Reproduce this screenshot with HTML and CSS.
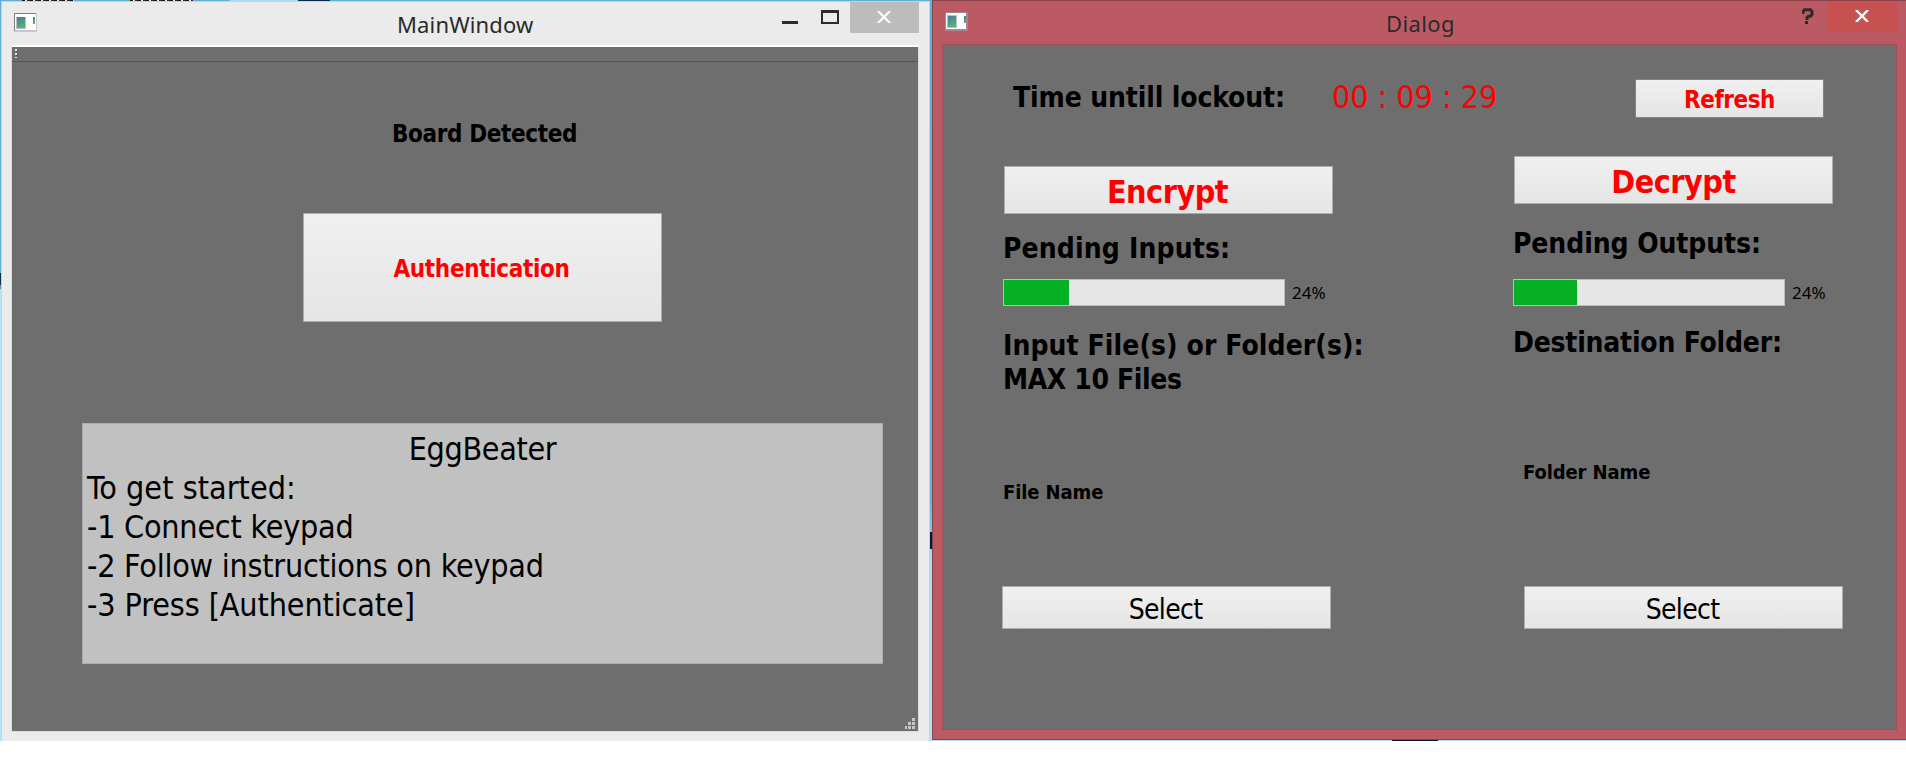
FILE: index.html
```html
<!DOCTYPE html>
<html lang="en">
<head>
<meta charset="utf-8">
<title>EggBeater</title>
<link rel="stylesheet" href="styles.css">
</head>
<body>
<div class="desktop">
  <i class="patch patch-text1"></i><i class="patch patch-text2"></i><i class="patch patch-glow"></i><i class="patch patch-dark"></i>
  <i class="patch patch-left"></i><i class="patch patch-mid"></i><i class="patch patch-bottom"></i>

  <section class="window main-window">
    <header class="titlebar">
      <svg class="app-icon" width="23" height="19" viewBox="0 0 23 19">
        <defs><linearGradient id="g" x1="0" y1="0" x2=".3" y2="1"><stop offset="0" stop-color="#3f7ca0"/><stop offset="1" stop-color="#5cb075"/></linearGradient></defs>
        <rect width="23" height="19" rx="1" fill="#c3c7d0"/><path d="M0 18V0H22V1H1V18Z" fill="#7c8088"/><rect x="1" y="1" width="21" height="16" fill="#fff"/>
        <rect x="2" y="4" width="10" height="12" fill="#b9c0cc"/><rect x="3" y="4" width="8" height="11" fill="url(#g)"/><rect x="19" y="4" width="2" height="7" fill="url(#g)"/>
      </svg>
      <h1 class="title main-title">MainWindow</h1>
      <div class="controls">
        <svg class="ctl-min" width="16" height="3"><rect width="16" height="3" fill="#2b2b2b"/></svg>
        <svg class="ctl-max" width="18" height="14"><path d="M0 0H18V14H0ZM2 3V12H16V3Z" fill="#2b2b2b" fill-rule="evenodd"/></svg>
        <span class="close"><svg width="14" height="12" viewBox="0 0 14 12"><path d="M1 0 13 12M13 0 1 12" stroke="#fff" stroke-width="2.2"/></svg></span>
      </div>
    </header>
    <div class="client main-client">
      <div class="toolbar"><i></i><i></i><i></i></div>
      <div class="board">Board Detected</div>
      <button class="btn btn-auth">Authentication</button>
      <div class="info">
        <p class="info-title">EggBeater</p>
        <p class="l1">To get started:</p>
        <p class="l2">-1 Connect keypad</p>
        <p class="l2">-2 Follow instructions on keypad</p>
        <p class="l3">-3 Press [Authenticate]</p>
      </div>
      <svg class="grip" width="10" height="12" fill="#c6c6c6"><path d="M7 0h3v3h-3zM3 4h3v3h-3zM7 4h3v3h-3zM0 8h2v3h-2zM3 8h3v3h-3zM7 8h3v3h-3z"/></svg>
    </div>
  </section>

  <section class="window dialog">
    <header class="titlebar">
      <svg class="app-icon" width="23" height="19" viewBox="0 0 23 19">
        <rect width="23" height="19" rx="1" fill="#a9848c"/><rect x="1" y="1" width="20" height="16" fill="#fff"/>
        <rect x="2" y="3" width="10" height="13" fill="#b9c0cc"/><rect x="3" y="4" width="8" height="11" fill="url(#g)"/><rect x="19" y="4" width="2" height="7" fill="url(#g)"/>
      </svg>
      <h1 class="title dialog-title">Dialog</h1>
      <div class="controls">
        <svg class="ctl-help" width="12" height="17"><path d="M1.5 6V3.5L3 1.7H9L10.5 3.5V6.5L9 8.2H7L5.5 9.5V12M3.5 14.5H6.5" transform="translate(-.5 0)" fill="none" stroke="#2b2b2b" stroke-width="3"/></svg>
        <span class="close"><svg width="14" height="12" viewBox="0 0 14 12"><path d="M1 0 13 12M13 0 1 12" stroke="#fff" stroke-width="2.4"/></svg></span>
      </div>
    </header>
    <div class="client dialog-client">
      <div class="top-row">
        <span class="lockout">Time untill lockout:</span>
        <span class="timer">00 : 09 : 29</span>
        <button class="btn btn-refresh">Refresh</button>
      </div>
      <div class="columns">
        <div class="col-in">
          <button class="btn btn-crypt">Encrypt</button>
          <div class="heading pending-in">Pending Inputs:</div>
          <div class="progress"><div class="track"><div class="fill" style="width:65px"></div></div><span>24%</span></div>
          <div class="heading files"><div class="files-a">Input File(s) or Folder(s):</div><div class="files-b">MAX 10 Files</div></div>
          <div class="name file-name">File Name</div>
          <button class="btn btn-select">Select</button>
        </div>
        <div class="col-out">
          <button class="btn btn-crypt">Decrypt</button>
          <div class="heading pending-out">Pending Outputs:</div>
          <div class="progress"><div class="track"><div class="fill" style="width:63px"></div></div><span>24%</span></div>
          <div class="heading destination">Destination Folder:</div>
          <div class="name folder-name">Folder Name</div>
          <button class="btn btn-select">Select</button>
        </div>
      </div>
    </div>
  </section>
</div>
</body>
</html>
```
FILE: styles.css
```css
* { box-sizing: border-box; margin: 0; padding: 0; }
body { background: #fff; font-family: "DejaVu Sans Condensed", "Noto Sans", sans-serif; color: #000; overflow: hidden; }

/* Desktop showing between the two windows */
.desktop { position: relative; width: 1906px; height: 741px; background: linear-gradient(#5fb0d8 0, #60b3dc 500px, #a9dcf5 560px, #b3e2f6 741px); overflow: hidden; }
.patch { position: absolute; display: block; }
.patch-text1 { left: 22px; top: 0; width: 52px; height: 1px; background: repeating-linear-gradient(90deg, #111 0 3px, #dce8ee 3px 5px, #3a2a20 5px 8px); }
.patch-text2 { left: 130px; top: 0; width: 63px; height: 1px; background: repeating-linear-gradient(90deg, #111 0 3px, #dce8ee 3px 5px, #3a2a20 5px 8px); }
.patch-glow { left: 230px; top: 0; width: 68px; height: 1px; background: #a8dcf4; }
.patch-dark { left: 298px; top: 0; width: 32px; height: 1px; background: #062c50; }
.patch-left { left: 0; top: 273px; width: 1px; height: 468px; background: linear-gradient(#083050 0 12px, #888 12px 16px, #b3e6fb 16px); }
.patch-mid { left: 929px; top: 532px; width: 4px; height: 17px; background: #04183a; }
.patch-bottom { left: 1392px; top: 740px; width: 46px; height: 1px; background: #04183a; }

.window { position: absolute; }
.main-window { left: 1px; top: 1px; width: 929px; height: 740px; background: #ebebeb; border: 1px solid #d3cfcf; border-bottom: 0; }
.dialog { left: 932px; top: 0; width: 974px; height: 740px; background: #bc5a64; border: 1px solid #8b434b; border-right: 0; }

.titlebar { display: flex; align-items: flex-start; height: 43px; }
.title { font-family: "Noto Sans", "Open Sans", sans-serif; font-size: 22px; font-weight: 400; line-height: 30px; color: #2a2a2a; white-space: nowrap; }
.controls { display: flex; align-items: flex-start; margin-left: auto; }
.close { display: flex; align-items: center; justify-content: center; width: 69px; height: 31px; padding: 0 1px 1px 0; }

.main-window .app-icon { margin: 11px 0 0 12px; }
.main-title { margin: 7px 0 0 360px; letter-spacing: .14px; }
.ctl-min { margin: 19px 23px 0 0; }
.ctl-max { margin: 8px 11px 0 0; }
.main-window .close { margin-right: 10px; background: #bcbcbc; }

.dialog .app-icon { margin: 11px 0 0 12px; }
.dialog-title { margin: 7px 0 0 418px; letter-spacing: .39px; }
.ctl-help { margin: 7px 14px 0 0; }
.dialog .close { margin-right: 9px; background: #c75050; }

.client { background: #6e6e6e; }
.main-client { position: relative; display: flow-root; margin-left: 9px; width: 908px; height: 687px; border: 1px solid #dcdcdc; border-top: 2px solid #fff; }
.dialog-client { display: flow-root; margin-left: 9px; width: 955px; height: 686px; border: 1px solid #a34e57; }

.toolbar { display: flex; flex-direction: column; gap: 2px; height: 15px; padding: 2px 0 0 3px; border-bottom: 1px solid #545454; }
.toolbar i { width: 2px; height: 2px; background: #e6e6e6; box-shadow: 1px 1px #555; }
.toolbar i:last-child { height: 1px; box-shadow: none; }
.board { margin: 58px 0 0 380px; font-size: 24px; line-height: 29px; font-weight: 700; letter-spacing: -.37px; }

.btn { display: flex; align-items: center; justify-content: center; border: 1px solid #adadad; background: linear-gradient(#f0f0f0, #e5e5e5); font-family: inherit; font-weight: 700; color: #f00; white-space: nowrap; }
.btn-auth { margin: 64px 0 0 291px; width: 359px; height: 109px; padding: 2px 2px 0 0; font-size: 24px; letter-spacing: -.34px; }

.info { margin: 101px 0 0 70px; width: 801px; height: 241px; padding: 6px 4px; border: 1px solid #ababb0; background: #c1c1c1; font-size: 32px; line-height: 39px; }
.info-title { text-align: center; letter-spacing: -.36px; }
.l1 { letter-spacing: .05px; }
.l2 { letter-spacing: -.24px; }
.l3 { letter-spacing: -.11px; }
.grip { position: absolute; right: 3px; bottom: 1px; }

.top-row { display: flex; align-items: flex-start; height: 111px; padding-left: 70px; white-space: nowrap; }
.lockout { width: 319px; margin-top: 36px; font-size: 28px; line-height: 34px; font-weight: 700; letter-spacing: -.14px; }
.timer { width: 303px; margin-top: 33px; font-size: 32px; line-height: 39px; color: #f00; letter-spacing: -.05px; }
.btn-refresh { margin-top: 34px; width: 189px; height: 39px; padding-top: 2px; border-color: #3c93e8; font-size: 24px; letter-spacing: -.47px; }

.columns { display: flex; padding-left: 60px; }
.col-in { width: 510px; padding-top: 10px; }
.btn-crypt { height: 48px; margin-left: 1px; padding-top: 3px; font-size: 32px; letter-spacing: -.49px; }
.col-in .btn-crypt { width: 329px; padding-right: 2px; }
.col-out .btn-crypt { width: 319px; }
.heading { font-size: 28px; line-height: 34px; font-weight: 700; white-space: nowrap; }
.pending-in { margin-top: 18px; letter-spacing: .13px; }
.pending-out { margin-top: 23px; letter-spacing: -.09px; }
.progress { display: flex; align-items: center; height: 27px; margin: 13px 0 0; gap: 7px; font: 17px "Noto Sans", sans-serif; }
.col-out .progress { margin-top: 18px; }
.track { width: 282px; height: 27px; border: 1px solid #bcbcbc; background: #e6e6e6; }
.col-out .track { width: 272px; }
.fill { height: 25px; background: #06b025; }
.files { margin-top: 23px; }
.files-a { letter-spacing: .08px; }
.files-b { letter-spacing: -.37px; }
.destination { margin-top: 20px; letter-spacing: -.22px; }
.name { font-size: 20px; line-height: 24px; font-weight: 700; letter-spacing: -.1px; }
.file-name { margin-top: 83px; }
.folder-name { margin: 100px 0 0 10px; }
.btn-select { height: 43px; font-size: 28px; font-weight: 400; color: #000; letter-spacing: -.67px; padding: 3px 2px 0 0; }
.col-in .btn-select { width: 329px; margin: 82px 0 0 -1px; }
.col-out .btn-select { width: 319px; margin: 102px 0 0 11px; }
```
